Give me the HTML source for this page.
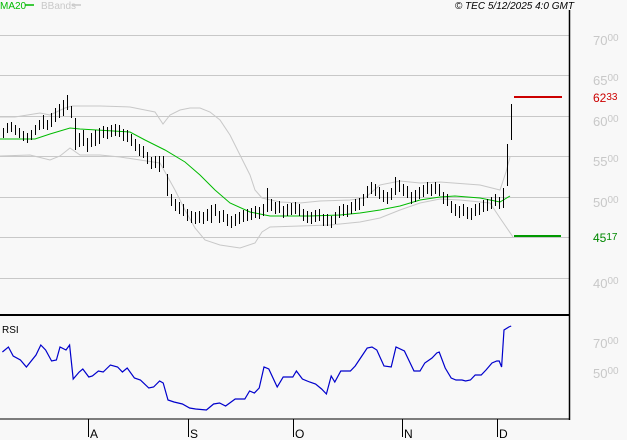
<!DOCTYPE html>
<html><head><meta charset="utf-8"><style>
body{margin:0;background:#f8f8f8;width:627px;height:440px;overflow:hidden;font-family:"Liberation Sans",sans-serif}
svg{position:absolute;left:0;top:0}
</style></head><body>
<svg width="627" height="440" viewBox="0 0 627 440" font-family="Liberation Sans, sans-serif">
<rect width="627" height="440" fill="#f8f8f8"/>
<g stroke="#c8c8c8" stroke-width="1">
<line x1="0" y1="35.5" x2="569" y2="35.5"/><line x1="0" y1="75.5" x2="569" y2="75.5"/><line x1="0" y1="116.5" x2="569" y2="116.5"/><line x1="0" y1="156.5" x2="569" y2="156.5"/><line x1="0" y1="197.5" x2="569" y2="197.5"/><line x1="0" y1="237.5" x2="569" y2="237.5"/><line x1="0" y1="278.5" x2="569" y2="278.5"/>
</g>
<g fill="#c8c8c8" font-size="13">
<text x="593" y="45">70<tspan font-size="10" dy="-4">00</tspan></text>
<text x="593" y="85">65<tspan font-size="10" dy="-4">00</tspan></text>
<text x="593" y="126">60<tspan font-size="10" dy="-4">00</tspan></text>
<text x="593" y="166">55<tspan font-size="10" dy="-4">00</tspan></text>
<text x="593" y="207">50<tspan font-size="10" dy="-4">00</tspan></text>
<text x="593" y="288">40<tspan font-size="10" dy="-4">00</tspan></text>
<text x="593" y="348">70<tspan font-size="10" dy="-4">00</tspan></text>
<text x="593" y="378">50<tspan font-size="10" dy="-4">00</tspan></text>
</g>
<text x="593" y="102" fill="#cc0000" font-size="12">62<tspan font-size="10" dy="-2">33</tspan></text>
<text x="593" y="242" fill="#008800" font-size="12">45<tspan font-size="10" dy="-2">17</tspan></text>
<rect x="514" y="96" width="48" height="2" fill="#cc0000"/>
<rect x="514" y="235" width="47" height="2" fill="#009900"/>
<polyline fill="none" stroke="#c8c8c8" points="0,117 15,117 40,113 50,115 65,108 72,106 100,106 130,107 145,110 155,112 163,124 170,115 180,110 190,108 200,108 210,112 220,120 230,135 240,155 250,175 255,190 262,198 280,202 300,203 320,201 350,200 365,198 380,185 400,181 420,183 440,182 480,185 500,190 506,172 510,157"/>
<polyline fill="none" stroke="#c8c8c8" points="0,156 30,155 50,160 60,156 70,148 80,155 100,155 120,157 140,160 160,163 175,190 185,210 195,228 205,240 220,245 240,248 255,243 262,232 270,227 300,226 330,225 360,222 380,218 400,210 420,203 440,199 460,200 490,203 500,218 513,237"/>
<polyline fill="none" stroke="#00bb00" points="0,139 35,139 50,134 70,128 80,129 130,132 145,140 165,150 185,162 200,175 215,190 230,203 250,212 260,214 270,216 310,216 340,215 360,213 380,210 400,206 420,200 440,197 455,196 480,198 500,202 510,196"/>
<path fill="none" stroke="#000" stroke-width="1" shape-rendering="crispEdges" d="M3.5 128V138M7.5 123V133M11.5 122V132M15.5 125V135M19.5 128V138M23.5 131V141M27.5 133V143M31.5 130V140M35.5 125V135M39.5 120V130M43.5 115V129M47.5 120V130M51.5 113V127M55.5 108V122M59.5 104V118M63.5 100V116M67.5 95V110M71.5 106V118M75.5 118V150M79.5 133V147M83.5 130V146M87.5 138V152M91.5 133V147M95.5 130V146M99.5 128V144M103.5 126V138M107.5 127V139M111.5 125V137M115.5 124V136M119.5 125V137M123.5 129V141M127.5 130V142M131.5 134V146M135.5 139V151M139.5 144V156M143.5 146V158M147.5 152V164M151.5 157V169M155.5 156V168M159.5 156V172M163.5 156V168M167.5 174V196M171.5 194V206M175.5 199V211M179.5 202V214M183.5 204V216M187.5 209V221M191.5 211V223M195.5 212V224M199.5 211V223M203.5 212V224M207.5 209V221M211.5 205V223M215.5 204V216M219.5 211V223M223.5 210V222M227.5 214V226M231.5 216V228M235.5 214V226M239.5 212V224M243.5 210V222M247.5 209V221M251.5 208V220M255.5 206V218M259.5 207V219M263.5 204V216M267.5 188V212M271.5 199V211M275.5 202V214M279.5 201V213M283.5 206V218M287.5 204V216M291.5 203V215M295.5 202V214M299.5 204V216M303.5 209V221M307.5 211V223M311.5 212V224M315.5 210V222M319.5 209V221M323.5 214V226M327.5 214V226M331.5 216V228M335.5 212V224M339.5 206V218M343.5 204V216M347.5 205V217M351.5 202V214M355.5 199V211M359.5 198V210M363.5 194V206M367.5 186V198M371.5 182V194M375.5 184V196M379.5 187V199M383.5 190V202M387.5 192V204M391.5 188V200M395.5 177V195M399.5 180V192M403.5 184V196M407.5 186V198M411.5 192V204M415.5 190V202M419.5 187V199M423.5 185V197M427.5 182V194M431.5 184V196M435.5 182V194M439.5 184V196M443.5 192V204M447.5 194V206M451.5 201V213M455.5 204V216M459.5 206V218M463.5 204V216M467.5 207V219M471.5 208V220M475.5 204V216M479.5 203V215M483.5 200V212M487.5 199V211M491.5 197V209M495.5 194V206M499.5 197V209M503.5 188V208M507.5 144V186M511.5 104V140"/>
<line x1="569.5" y1="10" x2="569.5" y2="420" stroke="#000" stroke-width="1.5"/>
<line x1="0" y1="315" x2="570" y2="315" stroke="#000" stroke-width="2"/>
<line x1="0" y1="419" x2="570" y2="419" stroke="#000" stroke-width="1"/>
<text x="2" y="333" font-size="10" fill="#000">RSI</text>
<g transform="scale(1.2,1)"><polyline fill="none" stroke="#0000cc" stroke-width="1.2" vector-effect="non-scaling-stroke" points="2,352 7,347 11,356 17,360 22,367 30,355 34,345 38,350 43,361 47,360 50,347 55,350 58,345 61,379 66,372 69,369 74,377 77,376 82,371 86,372 92,365 98,367 102,372 106,368 112,378 117,380 124,388 128,387 133,381 136,383 140,400 145,402 152,404 158,408 163,409 172,410 178,404 183,403 188,406 196,399 204,399 208,391 212,393 216,388 220,367 224,369 231,387 236,377 244,377 247,371 252,379 258,382 263,384 268,389 272,394 276,376 279,382 284,371 292,371 296,366 301,357 306,348 310,347 314,350 320,366 326,367 330,347 337,351 341,361 345,371 350,371 354,363 360,358 364,353 366,352 371,368 376,378 380,380 385,380 388,381 392,380 396,375 401,375 405,370 410,363 414,361 416,361 418,367 420,330 424,327 426,326"/></g>
<g stroke="#000"><line x1="88.5" y1="419" x2="88.5" y2="437"/><line x1="188.5" y1="419" x2="188.5" y2="437"/><line x1="293.5" y1="419" x2="293.5" y2="437"/><line x1="402.5" y1="419" x2="402.5" y2="437"/><line x1="497.5" y1="419" x2="497.5" y2="437"/></g>
<g font-size="12" fill="#000"><text x="90" y="438">A</text><text x="190" y="438">S</text><text x="295" y="438">O</text><text x="404" y="438">N</text><text x="499" y="438">D</text></g>
<text x="0" y="9" font-size="10" fill="#00bb00">MA20</text><line x1="25" y1="5" x2="34" y2="5" stroke="#00bb00" stroke-width="1.5"/>
<text x="41" y="9" font-size="10" fill="#c8c8c8">BBands</text><line x1="72" y1="5" x2="81" y2="5" stroke="#c8c8c8" stroke-width="1.5"/>
<text x="574" y="9" font-size="10" font-style="italic" fill="#000" text-anchor="end">© TEC 5/12/2025 4:0 GMT</text>
</svg>
</body></html>
